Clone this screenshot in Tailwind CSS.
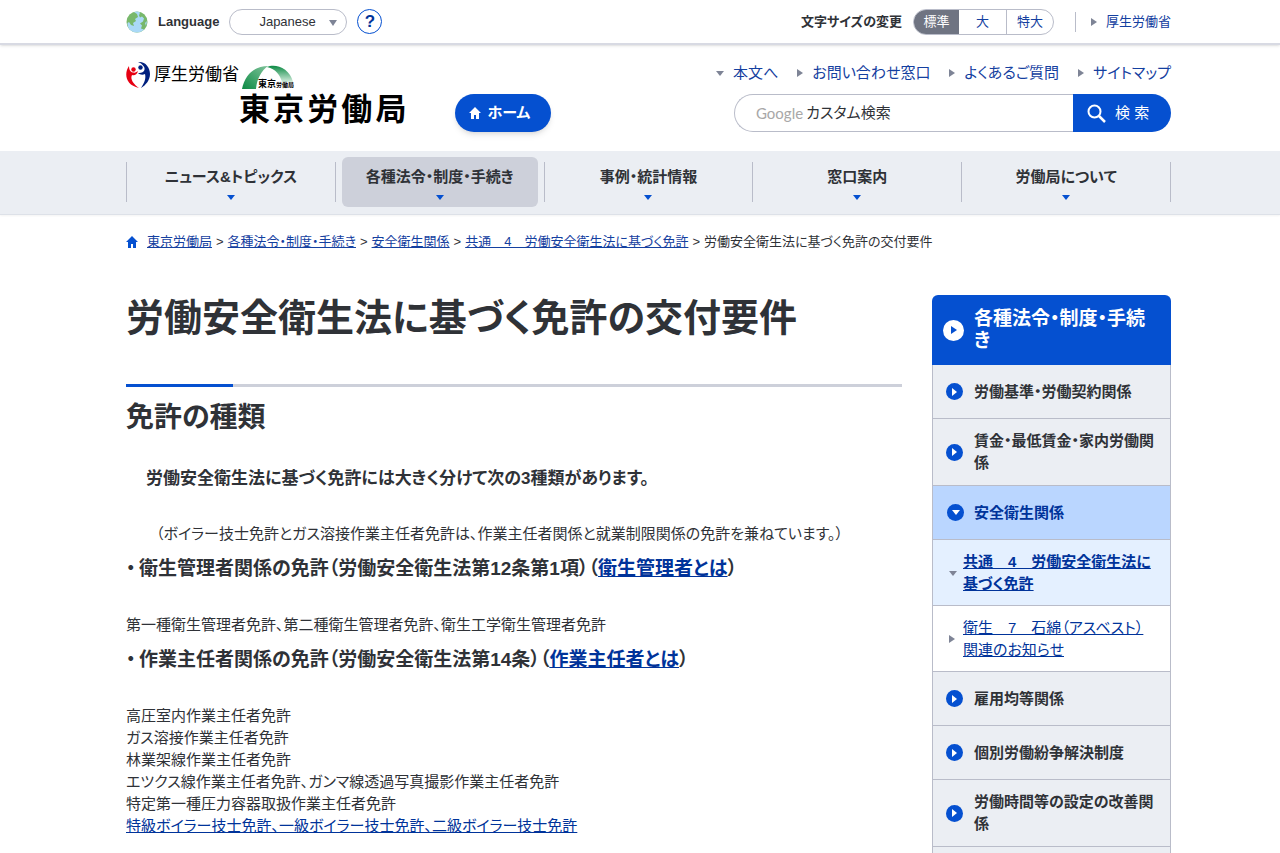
<!DOCTYPE html>
<html lang="ja">
<head>
  <meta charset="UTF-8">
  <title>労働安全衛生法に基づく免許の交付要件 | 東京労働局</title>
  <meta name="viewport" content="width=device-width, initial-scale=1.0">
  <script src="https://cdn.jsdelivr.net/npm/@tailwindcss/browser@4"></script>
</head>
<body class="bg-white text-[#2f3237] text-[15px] leading-[22px] overflow-x-hidden font-['Liberation_Sans','Noto_Sans_CJK_JP',sans-serif] [font-feature-settings:'palt']">

  <!-- top bar -->
  <div class="border-b-2 border-[#d8dae3] shadow-sm">
    <div class="max-w-[1062px] mx-auto pl-[17px] h-[43px] flex items-center justify-between text-[13px]">
      <div class="flex items-center">
        <svg class="w-[22px] h-[22px] mr-[10px]" viewBox="0 0 22 22" aria-hidden="true">
          <circle cx="11" cy="11" r="10.5" fill="#78b86b"/>
          <path d="M8 1l3 2 1 3-3 2 1 2-3 2 1 3-3-1-2-3-1.500 1C1 17 5 21.500 11 21.500c3 0 5-1 7-3l-3-1 1-3-2-2 3-2 1-3-2-2-2 1-1-2 1-3C11 0 10 .3 8 1z" fill="#aad9f7"/>
          <path d="M8 18l3-1 2 2-2 2zM19 12l2-2-1 5z" fill="#aad9f7"/>
        </svg>
        <label for="lang" class="font-bold mr-[10px]">Language</label>
        <div class="relative mr-[10px]">
          <select id="lang" class="appearance-none w-[118px] h-[26px] pl-[29px] rounded-full border border-[#b9bcc9] bg-white text-[13px]">
            <option>Japanese</option>
            <option>English</option>
          </select>
          <span class="absolute right-[10px] top-[11px] border-x-[4px] border-x-transparent border-t-[6px] border-t-[#7e8496] pointer-events-none"></span>
        </div>
        <button class="w-[25px] h-[25px] rounded-full border border-[#0550d0] text-[#00339a] text-[17px] leading-[22px] font-bold">?</button>
      </div>
      <div class="flex items-center">
        <span class="font-bold mr-[11px]">文字サイズの変更</span>
        <div class="flex h-[26px] rounded-full border border-[#b9bcc9] overflow-hidden text-[#1440a0]">
          <button class="w-[45px] bg-[#6f7482] text-white">標準</button>
          <button class="w-[47px]">大</button>
          <button class="w-[47px] border-l border-[#b9bcc9]">特大</button>
        </div>
        <div class="ml-[21px] pl-[15px] border-l border-[#b9bcc9] h-5 flex items-center">
          <a href="#" class="flex items-center gap-[9px] text-[#1440a0]"><span class="border-y-[4px] border-y-transparent border-l-[6px] border-l-[#7e8496]"></span>厚生労働省</a>
        </div>
      </div>
    </div>
  </div>

  <!-- header -->
  <header class="max-w-[1062px] mx-auto pl-[17px] h-[106px] flex justify-between">
    <div class="flex">
      <a href="#" class="flex items-center gap-1 h-[27px] mt-4 text-[17px] text-black">
        <svg class="w-6 h-7" viewBox="0 0 24 28" aria-hidden="true">
          <circle cx="7.500" cy="8.500" r="2.200" fill="#e60012"/>
          <path d="M3 5C-2 12-1 24 13 27 7 23 4 18 6 14c2 1 5 0 6-4-1 1-3 2-5 1.500C4 11 3 8 3 5z" fill="#e60012"/>
          <circle cx="14.500" cy="6.500" r="2.200" fill="#00207e"/>
          <path d="M12 1c7-1 12 5 12 12 0 6-4 11-9 14 4-6 5-10 4-14-2 1-5 1-7-1 2 0 4 0 6-2 2-3-1-7-6-9z" fill="#00207e"/>
        </svg>
        厚生労働省
      </a>
      <a href="#" class="text-black pt-5">
        <svg class="w-[54px] h-[25px] ml-[3px]" viewBox="0 0 54 25" aria-hidden="true">
          <defs>
            <linearGradient id="arch-left" x1="0" y1="1" x2="1" y2="0">
              <stop offset="0" stop-color="#0c8a44"/>
              <stop offset="1" stop-color="#7fc39a"/>
            </linearGradient>
            <linearGradient id="arch-right" x1="0" y1="0" x2="0" y2="1">
              <stop offset="0" stop-color="#0c8a44"/>
              <stop offset="1" stop-color="#d3ecdc"/>
            </linearGradient>
          </defs>
          <path d="M0 24C3 9 13 1 26 1 20 5 15 13 14 24z" fill="url(#arch-left)"/>
          <path d="M25 2c8-4 23 1 26 15H40C38 10 34 4 25 2z" fill="url(#arch-right)"/>
          <text x="16" y="22" font-size="9" font-weight="bold">東京</text>
          <text x="34" y="22" font-size="6" font-weight="bold">労働局</text>
        </svg>
        <span class="block mt-1 text-[31px] leading-[32px] font-bold tracking-widest">東京労働局</span>
      </a>
      <a href="#" class="ml-[45px] mt-[49px] w-24 h-[38px] rounded-full bg-[#0550d0] text-white font-bold flex items-center pl-[14px] gap-[7px] shadow-md">
        <svg class="w-3 h-3" viewBox="0 0 12 12" fill="currentColor" aria-hidden="true"><path d="M6 0 0 6h2v6h3V8h2v4h3V6h2z"/></svg>
        ホーム
      </a>
    </div>
    <div class="flex flex-col items-end">
      <ul class="flex gap-[19px] mt-[17px] text-[#1440a0]">
        <li><a href="#main" class="flex items-center gap-[9px]"><span class="border-x-[4px] border-x-transparent border-t-[5px] border-t-[#7e8496]"></span>本文へ</a></li>
        <li><a href="#" class="flex items-center gap-[9px]"><span class="border-y-[4px] border-y-transparent border-l-[6px] border-l-[#7e8496]"></span>お問い合わせ窓口</a></li>
        <li><a href="#" class="flex items-center gap-[9px]"><span class="border-y-[4px] border-y-transparent border-l-[6px] border-l-[#7e8496]"></span>よくあるご質問</a></li>
        <li><a href="#" class="flex items-center gap-[9px]"><span class="border-y-[4px] border-y-transparent border-l-[6px] border-l-[#7e8496]"></span>サイトマップ</a></li>
      </ul>
      <form class="flex mt-[10px] h-[38px] w-[437px]">
        <label for="q" class="flex items-center pl-[21px] border border-r-0 border-[#b9bcc9] rounded-l-full font-['Lato'] text-[#a8a8a8]">Google</label>
        <input id="q" type="text" placeholder="カスタム検索" class="flex-1 min-w-0 pl-[3px] border-y border-[#b9bcc9] outline-none placeholder:text-[#2f3237]">
        <button type="button" class="w-[98px] bg-[#0550d0] text-white rounded-r-full flex items-center pl-[14px] gap-[9px]">
          <svg class="w-[19px] h-[19px]" viewBox="0 0 19 19" fill="none" stroke="currentColor" stroke-width="2" aria-hidden="true"><circle cx="7.500" cy="7.500" r="6"/><path d="m12 12 6 6" stroke-width="2.500"/></svg>
          検 索
        </button>
      </form>
    </div>
  </header>

  <!-- global nav -->
  <nav class="bg-[#ebeef3] border-b border-[#dde1e8] shadow-xs">
    <ul class="max-w-[1062px] mx-auto pl-[17px] h-[63px] pt-[11px] flex items-start font-bold text-center">
      <li class="flex-1 h-10 border-l border-[#b9bcc9] px-[6px]"><a href="#" class="-my-[5px] h-[50px] flex flex-col items-center pt-[9px] gap-[7px]">ニュース&amp;トピックス<span class="border-x-[4px] border-x-transparent border-t-[5px] border-t-[#0550d0]"></span></a></li>
      <li class="flex-1 h-10 border-l border-[#b9bcc9] px-[6px]"><a href="#" class="-my-[5px] h-[50px] flex flex-col items-center pt-[9px] gap-[7px] bg-[#cdd0da] rounded-md">各種法令・制度・手続き<span class="border-x-[4px] border-x-transparent border-t-[5px] border-t-[#0550d0]"></span></a></li>
      <li class="flex-1 h-10 border-l border-[#b9bcc9] px-[6px]"><a href="#" class="-my-[5px] h-[50px] flex flex-col items-center pt-[9px] gap-[7px]">事例・統計情報<span class="border-x-[4px] border-x-transparent border-t-[5px] border-t-[#0550d0]"></span></a></li>
      <li class="flex-1 h-10 border-l border-[#b9bcc9] px-[6px]"><a href="#" class="-my-[5px] h-[50px] flex flex-col items-center pt-[9px] gap-[7px]">窓口案内<span class="border-x-[4px] border-x-transparent border-t-[5px] border-t-[#0550d0]"></span></a></li>
      <li class="flex-1 h-10 border-x border-[#b9bcc9] px-[6px]"><a href="#" class="-my-[5px] h-[50px] flex flex-col items-center pt-[9px] gap-[7px]">労働局について<span class="border-x-[4px] border-x-transparent border-t-[5px] border-t-[#0550d0]"></span></a></li>
    </ul>
  </nav>

  <div class="max-w-[1062px] mx-auto pl-[17px]">
    <!-- breadcrumb -->
    <ol class="flex items-center gap-1 mt-4 text-[13px]">
      <li class="mr-[5px]"><svg class="w-3 h-3 text-[#0550d0]" viewBox="0 0 12 12" fill="currentColor" aria-hidden="true"><path d="M6 0 0 6h2v6h3V8h2v4h3V6h2z"/></svg></li>
      <li><a href="#" class="underline text-[#1440a0]">東京労働局</a></li>
      <li>&gt;</li>
      <li><a href="#" class="underline text-[#1440a0]">各種法令・制度・手続き</a></li>
      <li>&gt;</li>
      <li><a href="#" class="underline text-[#1440a0]">安全衛生関係</a></li>
      <li>&gt;</li>
      <li><a href="#" class="underline text-[#1440a0]">共通　4　労働安全衛生法に基づく免許</a></li>
      <li>&gt;</li>
      <li>労働安全衛生法に基づく免許の交付要件</li>
    </ol>

    <div class="flex items-start gap-[30px] mt-[42px]">
      <main id="main" class="flex-1 min-w-0">
        <h1 class="text-[38px] leading-[46px] font-bold">労働安全衛生法に基づく免許の交付要件</h1>
        <div class="h-[3px] bg-[#cdd0da] mt-[43px]"><div class="h-full w-[107px] bg-[#0550d0]"></div></div>
        <h2 class="text-[28px] leading-[34px] font-bold mt-[14px]">免許の種類</h2>
        <p class="text-[17px] leading-[26px] font-bold pl-5 mt-[31px]">労働安全衛生法に基づく免許には大きく分けて次の3種類があります。</p>
        <p class="pl-[30px] mt-[31px]">（ボイラー技士免許とガス溶接作業主任者免許は、作業主任者関係と就業制限関係の免許を兼ねています。）</p>
        <h3 class="text-[19px] leading-[28px] font-bold mt-[10px]"><span class="inline-block w-[13px]">・</span>衛生管理者関係の免許（労働安全衛生法第12条第1項）（<a href="#" class="underline text-[#00339a]">衛生管理者とは</a>）</h3>
        <p class="mt-[31px]">第一種衛生管理者免許、第二種衛生管理者免許、衛生工学衛生管理者免許</p>
        <h3 class="text-[19px] leading-[28px] font-bold mt-[10px]"><span class="inline-block w-[13px]">・</span>作業主任者関係の免許（労働安全衛生法第14条）（<a href="#" class="underline text-[#00339a]">作業主任者とは</a>）</h3>
        <p class="mt-[31px]">
          高圧室内作業主任者免許<br>
          ガス溶接作業主任者免許<br>
          林業架線作業主任者免許<br>
          エツクス線作業主任者免許、ガンマ線透過写真撮影作業主任者免許<br>
          特定第一種圧力容器取扱作業主任者免許<br>
          <a href="#" class="underline text-[#00339a]">特級ボイラー技士免許、一級ボイラー技士免許、二級ボイラー技士免許</a>
        </p>
      </main>

      <!-- side menu -->
      <aside class="w-[239px] shrink-0 font-bold">
        <a href="#" class="flex items-center gap-[10px] h-[70px] pl-[11px] pr-4 rounded-t-md bg-[#0550d0] text-white text-[19px]">
          <span class="w-[21px] h-[21px] shrink-0 rounded-full bg-white flex items-center justify-center"><span class="border-y-[4px] border-y-transparent border-l-[6px] border-l-[#0550d0]"></span></span>
          各種法令・制度・手続き
        </a>
        <ul class="border-x border-[#b9bcc9]">
          <li><a href="#" class="flex items-center gap-[11px] min-h-[54px] py-[11px] pl-[13px] pr-[14px] border-b border-[#b9bcc9] bg-[#ebeef3]"><span class="w-[17px] h-[17px] shrink-0 rounded-full bg-[#0550d0] flex items-center justify-center"><span class="border-y-[4px] border-y-transparent border-l-[5px] border-l-white"></span></span>労働基準・労働契約関係</a></li>
          <li><a href="#" class="flex items-center gap-[11px] min-h-[54px] py-[11px] pl-[13px] pr-[14px] border-b border-[#b9bcc9] bg-[#ebeef3]"><span class="w-[17px] h-[17px] shrink-0 rounded-full bg-[#0550d0] flex items-center justify-center"><span class="border-y-[4px] border-y-transparent border-l-[5px] border-l-white"></span></span>賃金・最低賃金・家内労働関係</a></li>
          <li>
            <a href="#" class="flex items-center gap-[10px] min-h-[54px] py-[11px] pl-[14px] pr-[14px] border-b border-[#b9bcc9] bg-[#bad6ff] text-[#00339a]"><span class="w-[17px] h-[17px] shrink-0 rounded-full bg-[#0550d0] flex items-center justify-center"><span class="border-x-[4px] border-x-transparent border-t-[5px] border-t-white"></span></span>安全衛生関係</a>
            <ul class="text-[#00339a] underline">
              <li><a href="#" class="flex items-center gap-[6px] pt-[11px] pb-[10px] pl-4 pr-4 border-b border-[#b9bcc9] bg-[#e4f0ff]"><span class="shrink-0 border-x-[4px] border-x-transparent border-t-[5px] border-t-[#7e8496]"></span><span>共通　4　労働安全衛生法に基づく免許</span></a></li>
              <li><a href="#" class="flex items-center gap-[8px] pt-[11px] pb-[10px] pl-4 pr-4 border-b border-[#b9bcc9] font-normal"><span class="shrink-0 border-y-[4px] border-y-transparent border-l-[6px] border-l-[#7e8496]"></span><span>衛生　7　石綿（アスベスト）関連のお知らせ</span></a></li>
            </ul>
          </li>
          <li><a href="#" class="flex items-center gap-[11px] min-h-[54px] py-[11px] pl-[13px] pr-[14px] border-b border-[#b9bcc9] bg-[#ebeef3]"><span class="w-[17px] h-[17px] shrink-0 rounded-full bg-[#0550d0] flex items-center justify-center"><span class="border-y-[4px] border-y-transparent border-l-[5px] border-l-white"></span></span>雇用均等関係</a></li>
          <li><a href="#" class="flex items-center gap-[11px] min-h-[54px] py-[11px] pl-[13px] pr-[14px] border-b border-[#b9bcc9] bg-[#ebeef3]"><span class="w-[17px] h-[17px] shrink-0 rounded-full bg-[#0550d0] flex items-center justify-center"><span class="border-y-[4px] border-y-transparent border-l-[5px] border-l-white"></span></span>個別労働紛争解決制度</a></li>
          <li><a href="#" class="flex items-center gap-[11px] min-h-[54px] py-[11px] pl-[13px] pr-[14px] border-b border-[#b9bcc9] bg-[#ebeef3]"><span class="w-[17px] h-[17px] shrink-0 rounded-full bg-[#0550d0] flex items-center justify-center"><span class="border-y-[4px] border-y-transparent border-l-[5px] border-l-white"></span></span>労働時間等の設定の改善関係</a></li>
          <li class="h-[54px] bg-[#ebeef3]"></li>
        </ul>
      </aside>
    </div>
  </div>
</body>
</html>
